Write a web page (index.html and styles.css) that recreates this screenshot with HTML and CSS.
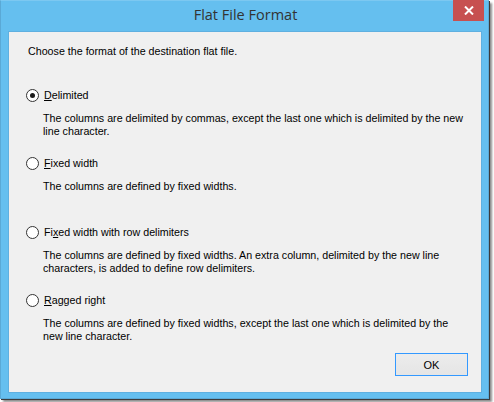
FILE: index.html
```html
<!DOCTYPE html>
<html>
<head>
<meta charset="utf-8">
<link rel="stylesheet" href="styles.css">
</head>
<body>
<div class="window">
  <div class="titlebar">
    <div class="title">Flat File Format</div>
    <div class="close"><svg width="10" height="9" viewBox="0 0 10 9"><path d="M1 0.5 L9 8.5 M9 0.5 L1 8.5" stroke="#fff" stroke-width="2"/></svg></div>
  </div>
  <div class="client">
    <p class="intro">Choose the format of the destination flat file.</p>
    <div class="option first">
      <div class="radio-row"><span class="radio checked"></span><span class="label"><u>D</u>elimited</span></div>
      <p class="desc">The columns are delimited by commas, except the last one which is delimited by the new line character.</p>
    </div>
    <div class="option">
      <div class="radio-row"><span class="radio"></span><span class="label"><u>F</u>ixed width</span></div>
      <p class="desc">The columns are defined by fixed widths.</p>
    </div>
    <div class="option third">
      <div class="radio-row"><span class="radio"></span><span class="label">Fi<u>x</u>ed width with row delimiters</span></div>
      <p class="desc">The columns are defined by fixed widths. An extra column, delimited by the new line characters, is added to define row delimiters.</p>
    </div>
    <div class="option">
      <div class="radio-row"><span class="radio"></span><span class="label"><u>R</u>agged right</span></div>
      <p class="desc">The columns are defined by fixed widths, except the last one which is delimited by the new line character.</p>
    </div>
    <div class="buttons"><button class="ok">OK</button></div>
  </div>
</div>
</body>
</html>
```
FILE: styles.css
```css
html, body { margin: 0; padding: 0; background: #ffffff; }
body { width: 494px; height: 402px; overflow: hidden; }
.window {
  width: 489px;
  height: 399px;
  box-sizing: border-box;
  background: #65bfef;
  border: 1px solid #5aa9d6;
  border-top-color: #7cc8f1;
  box-shadow: 1px 1px 0 #3c3c3c, 3px 3px 2px rgba(0,0,0,0.45);
  display: flex;
  flex-direction: column;
}
.titlebar {
  height: 30px;
  position: relative;
  display: flex;
  justify-content: center;
  align-items: flex-start;
}
.title {
  font-family: "Open Sans", "Noto Sans", sans-serif;
  font-size: 14.5px;
  color: #333333;
  margin-top: 4px;
  margin-left: 2px;
}
.close {
  position: absolute;
  right: 4px;
  top: -1px;
  width: 31px;
  height: 21px;
  background: #c75050;
  display: flex;
  align-items: center;
  justify-content: center;
}
.client {
  margin: 0 6px 0 7px;
  height: 362px;
  background: #f0f0f0;
  border: 1px solid #5fb0e0;
  box-sizing: border-box;
  font-family: "Liberation Sans", Arial, sans-serif;
  font-size: 10.7px;
  color: #000;
  padding: 13px 0 0 19px;
  display: flex;
  flex-direction: column;
}
p { margin: 0; }
.intro { line-height: 13px; }
.option { display: flex; flex-direction: column; }
.option.first { margin-top: 30px; }
.option + .option { margin-top: 18px; }
.option.third { margin-top: 32px; }
.radio-row { display: flex; align-items: center; height: 15px; }
.radio {
  width: 11px; height: 11px;
  border: 1px solid #333;
  border-radius: 50%;
  background: #fff;
  box-sizing: content-box;
  position: relative;
  margin-left: -2px;
}
.radio.checked::after {
  content: "";
  position: absolute;
  left: 3px; top: 3px;
  width: 5px; height: 5px;
  border-radius: 50%;
  background: #1a1a1a;
}
.label { margin-left: 5px; line-height: 13px; }
.desc {
  margin: 9px 0 0 15px;
  line-height: 13px;
  width: 425px;
}
.buttons { display: flex; justify-content: flex-end; margin-top: auto; padding: 0 13px 16px 0; }
.ok {
  width: 73px; height: 23px;
  border: 1px solid #3399ff;
  background: linear-gradient(#ececec, #e5e5e5);
  font-family: "Liberation Sans", Arial, sans-serif;
  font-size: 11px;
  color: #000;
  padding: 0;
}
```
